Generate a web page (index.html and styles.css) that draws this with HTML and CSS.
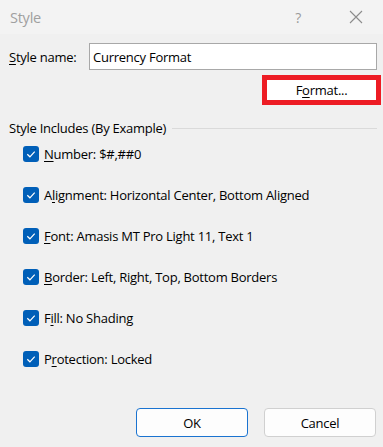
FILE: index.html
```html
<!DOCTYPE html>
<html>
<head>
<meta charset="utf-8">
<link rel="stylesheet" href="styles.css">
</head>
<body>
<div class="window">
  <div class="titlebar">
    <span class="title">Style</span>
    <span class="help">?</span>
    <svg class="close" width="14" height="14" viewBox="0 0 14 14"><path d="M1 1 L13 13 M13 1 L1 13" stroke="#8c8c8c" stroke-width="1.1" fill="none"/></svg>
  </div>
  <div class="content">
    <div class="name-row">
      <span class="label"><u>S</u>tyle name:</span>
      <div class="input">Currency Format</div>
    </div>
    <div class="format-row">
      <div class="format-btn">F<u>o</u>rmat...</div>
    </div>
    <div class="group-head">
      <span>Style Includes (By Example)</span>
      <div class="rule"></div>
    </div>
    <div class="list">
      <div class="item"><span class="cb"><svg width="16" height="16" viewBox="0 0 16 16"><path d="M4.3 8.3 L6.9 10.8 L11.7 5.6" stroke="#fff" stroke-width="1.2" fill="none"/></svg></span><span><u>N</u>umber: $#,##0</span></div>
      <div class="item"><span class="cb"><svg width="16" height="16" viewBox="0 0 16 16"><path d="M4.3 8.3 L6.9 10.8 L11.7 5.6" stroke="#fff" stroke-width="1.2" fill="none"/></svg></span><span>A<u>l</u>ignment: Horizontal Center, Bottom Aligned</span></div>
      <div class="item"><span class="cb"><svg width="16" height="16" viewBox="0 0 16 16"><path d="M4.3 8.3 L6.9 10.8 L11.7 5.6" stroke="#fff" stroke-width="1.2" fill="none"/></svg></span><span><u>F</u>ont: Amasis MT Pro Light 11, Text 1</span></div>
      <div class="item"><span class="cb"><svg width="16" height="16" viewBox="0 0 16 16"><path d="M4.3 8.3 L6.9 10.8 L11.7 5.6" stroke="#fff" stroke-width="1.2" fill="none"/></svg></span><span><u>B</u>order: Left, Right, Top, Bottom Borders</span></div>
      <div class="item"><span class="cb"><svg width="16" height="16" viewBox="0 0 16 16"><path d="M4.3 8.3 L6.9 10.8 L11.7 5.6" stroke="#fff" stroke-width="1.2" fill="none"/></svg></span><span>F<u>i</u>ll: No Shading</span></div>
      <div class="item"><span class="cb"><svg width="16" height="16" viewBox="0 0 16 16"><path d="M4.3 8.3 L6.9 10.8 L11.7 5.6" stroke="#fff" stroke-width="1.2" fill="none"/></svg></span><span>P<u>r</u>otection: Locked</span></div>
    </div>
    <div class="buttons">
      <div class="btn ok">OK</div>
      <div class="btn">Cancel</div>
    </div>
  </div>
</div>
</body>
</html>
```
FILE: styles.css
```css
html, body {
  margin: 0;
  padding: 0;
  background: #f0f0f0;
}
body {
  font-family: "Open Sans", "Noto Sans", sans-serif;
  font-size: 13px;
  letter-spacing: -0.25px;
  color: #000;
}
.window {
  width: 383px;
  height: 447px;
  display: flex;
  flex-direction: column;
  overflow: hidden;
}
.titlebar {
  height: 34px;
  background: #f3f3f3;
  display: flex;
  align-items: center;
  padding-left: 10px;
  box-sizing: border-box;
}
.title {
  color: #a0a0a0;
  font-size: 14.5px;
  flex: 1;
}
.help {
  color: #9a9a9a;
  font-size: 14px;
  margin-right: 48px;
}
.close {
  margin-right: 20px;
}
u {
  text-decoration-thickness: 1px;
  text-underline-offset: 2px;
}
.content {
  display: flex;
  flex-direction: column;
  padding: 9px 2px 0 9px;
}
.name-row {
  display: flex;
  align-items: center;
  height: 27px;
}
.label {
  width: 80px;
}
.input {
  width: 288px;
  height: 27px;
  box-sizing: border-box;
  background: #fff;
  border: 1px solid #a8a8a8;
  padding-left: 3px;
  display: flex;
  align-items: center;
}
.format-row {
  display: flex;
  justify-content: flex-end;
  margin-top: 5px;
}
.format-btn {
  width: 119px;
  height: 30px;
  box-sizing: border-box;
  border: 5px solid #ed1c24;
  background: #fff;
  display: flex;
  align-items: center;
  justify-content: center;
}
.group-head {
  display: flex;
  align-items: center;
  height: 20px;
  margin-top: 13px;
  margin-right: 4px;
}
.rule {
  flex: 1;
  height: 1px;
  background: #dadada;
  margin-left: 6px;
}
.list {
  display: flex;
  flex-direction: column;
  gap: 21px;
  margin-top: 6px;
  padding-left: 14px;
}
.item {
  display: flex;
  align-items: center;
  height: 20px;
}
.cb {
  width: 16px;
  height: 16px;
  border-radius: 3px;
  background: #005fb8;
  display: flex;
  margin-right: 5px;
}
.buttons {
  display: flex;
  justify-content: flex-end;
  gap: 16px;
  margin-top: 39px;
  margin-right: 5px;
}
.btn {
  width: 112px;
  height: 29px;
  box-sizing: border-box;
  background: #fdfdfd;
  border: 1px solid #d0d0d0;
  border-radius: 4px;
  display: flex;
  align-items: center;
  justify-content: center;
}
.btn.ok {
  border-color: #1a73d0;
}
```
